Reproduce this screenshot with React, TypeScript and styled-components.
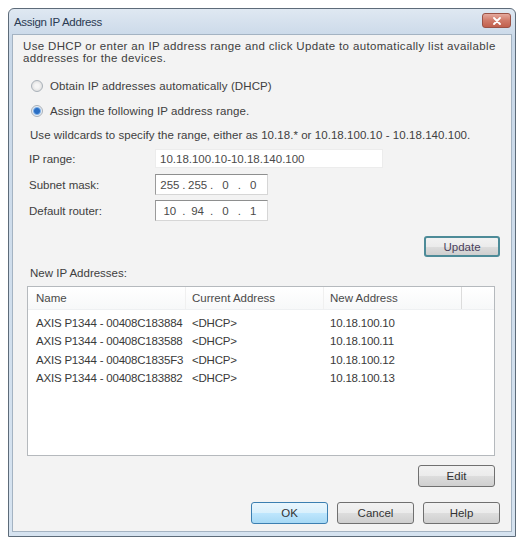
import React from 'react';
import styled, {createGlobalStyle} from 'styled-components';

const GlobalStyle = createGlobalStyle`
  body {
    margin: 0;
    background: #ffffff;
    font-family: "Liberation Sans", Arial, sans-serif;
  }
`;

const devices = [
  {name: 'AXIS P1344 - 00408C183884', current: '<DHCP>', next: '10.18.100.10'},
  {name: 'AXIS P1344 - 00408C183588', current: '<DHCP>', next: '10.18.100.11'},
  {name: 'AXIS P1344 - 00408C1835F3', current: '<DHCP>', next: '10.18.100.12'},
  {name: 'AXIS P1344 - 00408C183882', current: '<DHCP>', next: '10.18.100.13'},
];

const CloseIcon = () => (
  <svg width="10" height="8" viewBox="0 0 10 8">
    <path d="M2 1 L8 7 M8 1 L2 7" stroke="#ffffff" strokeWidth="1.8" strokeLinecap="round"/>
  </svg>
);

const IpField = ({octets}: {octets: string[]}) => (
  <IpBox>
    {octets.map((o, i) => (
      <React.Fragment key={i}>
        {i > 0 && <Dot>.</Dot>}
        <Octet>{o}</Octet>
      </React.Fragment>
    ))}
  </IpBox>
);

const App = () => {
  return (
    <>
      <GlobalStyle/>
      <Window>
        <TitleBar>
          <Title>Assign IP Address</Title>
          <CloseButton><CloseIcon/></CloseButton>
        </TitleBar>
        <Client>
          <Intro>
            Use DHCP or enter an IP address range and click Update to automatically list available
            <br/>addresses for the devices.
          </Intro>
          <RadioRow $top={13}>
            <Radio/>
            <span>Obtain IP addresses automatically (DHCP)</span>
          </RadioRow>
          <RadioRow $top={7}>
            <Radio $checked/>
            <span>Assign the following IP address range.</span>
          </RadioRow>
          <Hint>Use wildcards to specify the range, either as 10.18.* or 10.18.100.10 - 10.18.140.100.</Hint>
          <FieldRow $top={6}>
            <Label>IP range:</Label>
            <TextBox>10.18.100.10-10.18.140.100</TextBox>
          </FieldRow>
          <FieldRow $top={5}>
            <Label>Subnet mask:</Label>
            <IpField octets={['255', '255', '0', '0']}/>
          </FieldRow>
          <FieldRow $top={5}>
            <Label>Default router:</Label>
            <IpField octets={['10', '94', '0', '1']}/>
          </FieldRow>
          <ButtonRow $top={15}>
            <Button $variant="focus">Update</Button>
          </ButtonRow>
          <SectionLabel>New IP Addresses:</SectionLabel>
          <ListBox>
            <HeaderRow>
              <HeadCell>Name</HeadCell>
              <HeadCell>Current Address</HeadCell>
              <HeadCell>New Address</HeadCell>
              <HeadCell/>
            </HeaderRow>
            {devices.map((d) => (
              <ListRow key={d.name}>
                <Cell>{d.name}</Cell>
                <Cell>{d.current}</Cell>
                <Cell>{d.next}</Cell>
                <Cell/>
              </ListRow>
            ))}
          </ListBox>
          <ButtonRow $top={9} $right={5}>
            <Button>Edit</Button>
          </ButtonRow>
          <ButtonRow $top={15} $gap={9}>
            <Button $variant="default">OK</Button>
            <Button>Cancel</Button>
            <Button>Help</Button>
          </ButtonRow>
        </Client>
      </Window>
    </>
  );
};

const Window = styled.div`
  margin: 8px 0 0 8px;
  width: 508px;
  box-sizing: border-box;
  border: 1px solid #5d6b79;
  border-radius: 6px 6px 0 0;
  background: linear-gradient(180deg, #dfe8f2 0%, #c9d8e8 30px, #d6e3f0 100%);
  padding: 0 3px 4px 3px;
  box-shadow: 0 1px 0 #3f5d73;
`;

const TitleBar = styled.div`
  height: 25px;
  display: flex;
  align-items: center;
  justify-content: space-between;
  padding: 0 1px 0 2px;
`;

const Title = styled.div`
  font-size: 11.5px;
  color: #2a3a52;
  letter-spacing: -0.3px;
`;

const CloseButton = styled.div`
  width: 27px;
  height: 13px;
  margin-top: -2px;
  display: flex;
  align-items: center;
  justify-content: center;
  border: 1px solid #9a5246;
  border-radius: 3px;
  background: linear-gradient(180deg, #e5a99d 0%, #d07a69 50%, #c1604d 100%);
`;

const Client = styled.div`
  height: 498px;
  box-sizing: border-box;
  border: 1px solid #a4b3c2;
  background: #f3f3f3;
  padding: 5px 11px 0 10px;
  display: flex;
  flex-direction: column;
  font-size: 11.5px;
  color: #404040;
`;

const Intro = styled.div`
  line-height: 12px;
  letter-spacing: 0.35px;
  white-space: nowrap;
`;

const RadioRow = styled.div<{$top: number}>`
  margin-top: ${p => p.$top}px;
  height: 18px;
  display: flex;
  align-items: center;
  gap: 7px;
  padding-left: 8px;
  letter-spacing: 0.1px;
`;

const Radio = styled.div<{$checked?: boolean}>`
  width: 10px;
  height: 10px;
  border-radius: 50%;
  border: 1px solid #a9b1b9;
  background: ${p => p.$checked
    ? 'radial-gradient(circle, #2b6fc4 0 2.5px, #7fb0e6 3.5px, #e8eef5 4.5px)'
    : 'radial-gradient(circle, #f5f5f5 0 2px, #e2e2e2 5px)'};
`;

const Hint = styled.div`
  margin-top: 8px;
  height: 14px;
  line-height: 14px;
  padding-left: 7px;
  letter-spacing: 0.05px;
  white-space: nowrap;
`;

const FieldRow = styled.div<{$top: number}>`
  margin-top: ${p => p.$top}px;
  height: 21px;
  display: flex;
  align-items: center;
  padding-left: 6px;
`;

const Label = styled.div`
  width: 126px;
`;

const TextBox = styled.div`
  width: 228px;
  height: 19px;
  box-sizing: border-box;
  background: #ffffff;
  border: 1px solid #ececec;
  padding-left: 4px;
  display: flex;
  align-items: center;
  color: #4a4a4a;
`;

const IpBox = styled.div`
  width: 113px;
  height: 21px;
  box-sizing: border-box;
  background: #ffffff;
  border: 1px solid #d6d6d6;
  border-top-color: #8e8f8f;
  border-left-color: #9a9a9a;
  display: flex;
  align-items: center;
  padding: 0 2px;
  color: #4a4a4a;
`;

const Octet = styled.span`
  flex: 1;
  text-align: center;
`;

const Dot = styled.span`
  width: 4px;
  text-align: center;
`;

const ButtonRow = styled.div<{$top: number; $right?: number; $gap?: number}>`
  margin-top: ${p => p.$top}px;
  display: flex;
  justify-content: flex-end;
  gap: ${p => p.$gap ?? 0}px;
  padding-right: ${p => p.$right ?? 0}px;
`;

const Button = styled.div<{$variant?: 'default' | 'focus'}>`
  width: 77px;
  height: 22px;
  box-sizing: border-box;
  display: flex;
  align-items: center;
  justify-content: center;
  border-radius: 3px;
  color: #333333;
  border: 1px solid ${p => p.$variant === 'default' ? '#3c7fb1' : '#707070'};
  background: ${p => p.$variant === 'default'
    ? 'linear-gradient(180deg, #eaf6fd 0%, #d9f0fc 50%, #bee6fd 51%, #a7d9f5 100%)'
    : 'linear-gradient(180deg, #f2f2f2 0%, #ebebeb 50%, #dddddd 51%, #cfcfcf 100%)'};
  ${p => p.$variant === 'focus' && `
    width: 76px;
    height: 21px;
    border: 2px solid #4d8b98;
    color: #4a3f5c;
  `}
`;

const SectionLabel = styled.div`
  margin-top: 9px;
  height: 14px;
  line-height: 14px;
  padding-left: 7px;
`;

const ListBox = styled.div`
  margin: 6px 5px 0 4px;
  height: 170px;
  box-sizing: border-box;
  border: 1px solid #b5b9bd;
  background: #ffffff;
`;

const gridCols = `158px 138px 138px 1fr`;

const HeaderRow = styled.div`
  display: grid;
  grid-template-columns: ${gridCols};
  height: 22px;
  background: linear-gradient(180deg, #ffffff 0%, #f7f8f9 100%);
  border-bottom: 1px solid #eef0f2;
  margin-bottom: 4px;
`;

const HeadCell = styled.div`
  display: flex;
  align-items: center;
  padding-left: 6px;
  color: #4a4a4a;
  border-right: 1px solid #f0f0f0;

  &:first-child {
    padding-left: 8px;
  }

  &:nth-child(3) {
    border-right-color: #dcdcdc;
  }

  &:last-child {
    border-right: none;
  }
`;

const ListRow = styled.div`
  display: grid;
  grid-template-columns: ${gridCols};
  height: 18.3px;
`;

const Cell = styled.div`
  display: flex;
  align-items: center;
  padding-left: 6px;
  white-space: nowrap;
  color: #3a3a3a;
  letter-spacing: -0.2px;

  &:first-child {
    padding-left: 8px;
  }
`;

export default App;
